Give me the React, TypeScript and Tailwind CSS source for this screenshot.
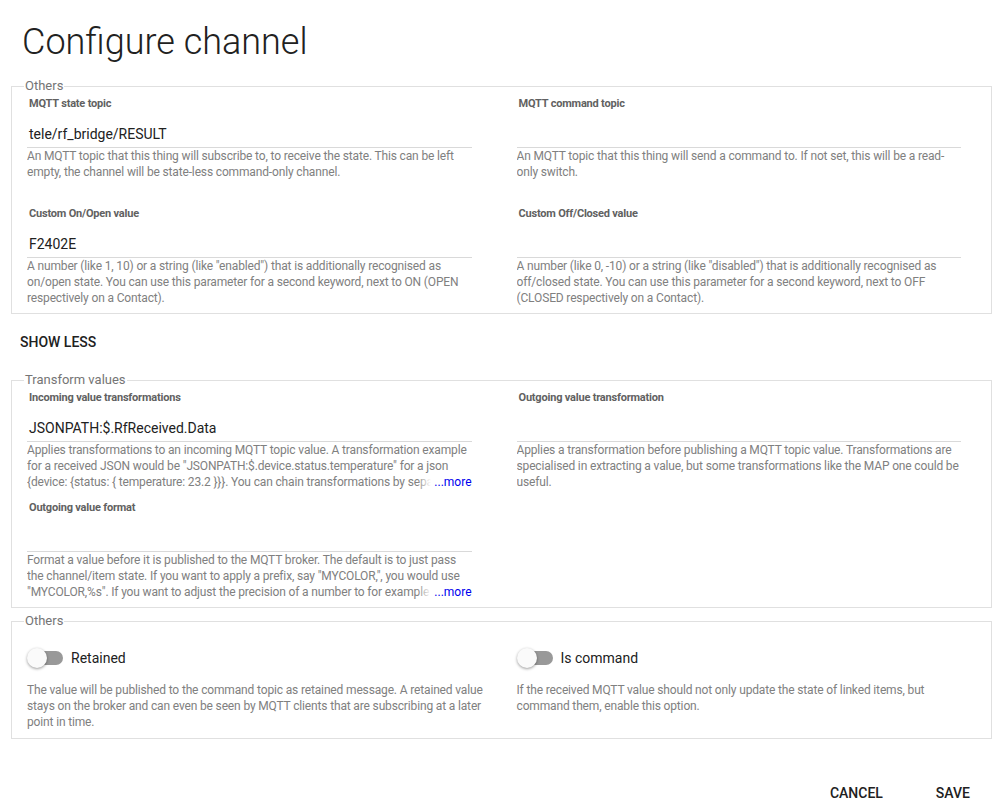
import type { ReactNode } from "react";

interface FieldProps {
  label: string;
  value?: string;
  desc: string;
  more?: boolean;
}

function Field({ label, value, desc, more }: FieldProps) {
  return (
    <div className="pl-[15px] pr-[30px]">
      <div className="pl-[2px] pt-px text-[11px] font-bold leading-[14px] tracking-[-0.2px] text-[#616161]">
        {label}
      </div>
      <div className="h-[37px] border-b border-[#d9d9d9] pl-[2px] pt-[14px] text-sm leading-[18px] text-[#212121]">
        {value}
      </div>
      <div className="relative h-[48px] overflow-hidden text-xs leading-4 tracking-[-0.15px] text-[#808080]">
        {desc}
        {more && (
          <div className="absolute bottom-0 right-0 flex h-4">
            <div className="w-[14px] bg-gradient-to-r from-transparent to-white" />
            <a href="#" className="bg-white pl-[3px] tracking-normal text-[#0000ee]">
              ...more
            </a>
          </div>
        )}
      </div>
    </div>
  );
}

function Group({ title, children, className }: { title: string; children: ReactNode; className?: string }) {
  return (
    <fieldset className={`border border-[#e0e0e0] ${className ?? ""}`}>
      <legend className="ml-[12px] px-px text-[13px] leading-4 text-[#757575]">{title}</legend>
      {children}
    </fieldset>
  );
}

function Toggle({ label }: { label: string }) {
  return (
    <div className="flex h-[36px] items-center">
      <div className="relative h-5 w-[36px]">
        <div className="absolute left-[8px] right-0 top-[3px] h-[14px] rounded-full bg-[#999999]" />
        <div className="absolute left-0 top-0 h-5 w-5 rounded-full bg-[#fafafa] shadow-[0_1px_3px_rgba(0,0,0,0.4)]" />
      </div>
      <span className="ml-[8px] text-sm text-[#212121]">{label}</span>
    </div>
  );
}

export default function App() {
  return (
    <div className="min-h-[812px] bg-white pl-[11px] pr-[6px] font-['Roboto',sans-serif]">
      <div className="h-[78px] pl-[11px] pt-[20px] text-[36px] font-light leading-[44px] text-[#212121]">
        Configure channel
      </div>

      <Group title="Others" className="pb-[7px]">
        <div className="grid grid-cols-2 gap-y-[10px] pt-[2px]">
          <Field
            label="MQTT state topic"
            value="tele/rf_bridge/RESULT"
            desc="An MQTT topic that this thing will subscribe to, to receive the state. This can be left empty, the channel will be state-less command-only channel."
          />
          <Field
            label="MQTT command topic"
            desc="An MQTT topic that this thing will send a command to. If not set, this will be a read-only switch."
          />
          <Field
            label="Custom On/Open value"
            value="F2402E"
            desc='A number (like 1, 10) or a string (like "enabled") that is additionally recognised as on/open state. You can use this parameter for a second keyword, next to ON (OPEN respectively on a Contact).'
          />
          <Field
            label="Custom Off/Closed value"
            desc='A number (like 0, -10) or a string (like "disabled") that is additionally recognised as off/closed state. You can use this parameter for a second keyword, next to OFF (CLOSED respectively on a Contact).'
          />
        </div>
      </Group>

      <div className="ml-[9px] mt-[10px] flex h-[36px] items-center text-sm font-medium text-[#212121]">
        SHOW LESS
      </div>

      <Group title="Transform values" className="mt-[12px] pb-[7px]">
        <div className="grid grid-cols-2 gap-y-[10px] pt-[2px]">
          <Field
            label="Incoming value transformations"
            value="JSONPATH:$.RfReceived.Data"
            more
            desc='Applies transformations to an incoming MQTT topic value. A transformation example for a received JSON would be "JSONPATH:$.device.status.temperature" for a json {device: {status: { temperature: 23.2 }}}. You can chain transformations by separating them with the intersection character ∩.'
          />
          <Field
            label="Outgoing value transformation"
            desc="Applies a transformation before publishing a MQTT topic value. Transformations are specialised in extracting a value, but some transformations like the MAP one could be useful."
          />
          <Field
            label="Outgoing value format"
            more
            desc={'Format a value before it is published to the MQTT broker. The default is to just pass the channel/item state. If you want to apply a prefix, say "MYCOLOR,", you would use "MYCOLOR,%s". If you want to adjust the precision of a number to for example 4 digits, you would use "%.4f".'}
          />
        </div>
      </Group>

      <Group title="Others" className="mt-[5px] pb-[8px]">
        <div className="grid grid-cols-2 pt-[11px]">
          <div className="pl-[15px] pr-[14px]">
            <Toggle label="Retained" />
            <p className="mt-[6px] text-xs leading-4 tracking-[-0.15px] text-[#808080]">
              The value will be published to the command topic as retained message. A retained value stays on the
              broker and can even be seen by MQTT clients that are subscribing at a later point in time.
            </p>
          </div>
          <div className="pl-[15px] pr-[14px]">
            <Toggle label="Is command" />
            <p className="mt-[6px] text-xs leading-4 tracking-[-0.15px] text-[#808080]">
              If the received MQTT value should not only update the state of linked items, but command them, enable
              this option.
            </p>
          </div>
        </div>
      </Group>

      <div className="mt-[36px] flex h-[36px] justify-end gap-[21px] pr-[6px]">
        <button className="px-4 text-sm font-medium text-[#212121]">CANCEL</button>
        <button className="px-4 text-sm font-medium text-[#212121]">SAVE</button>
      </div>
    </div>
  );
}
